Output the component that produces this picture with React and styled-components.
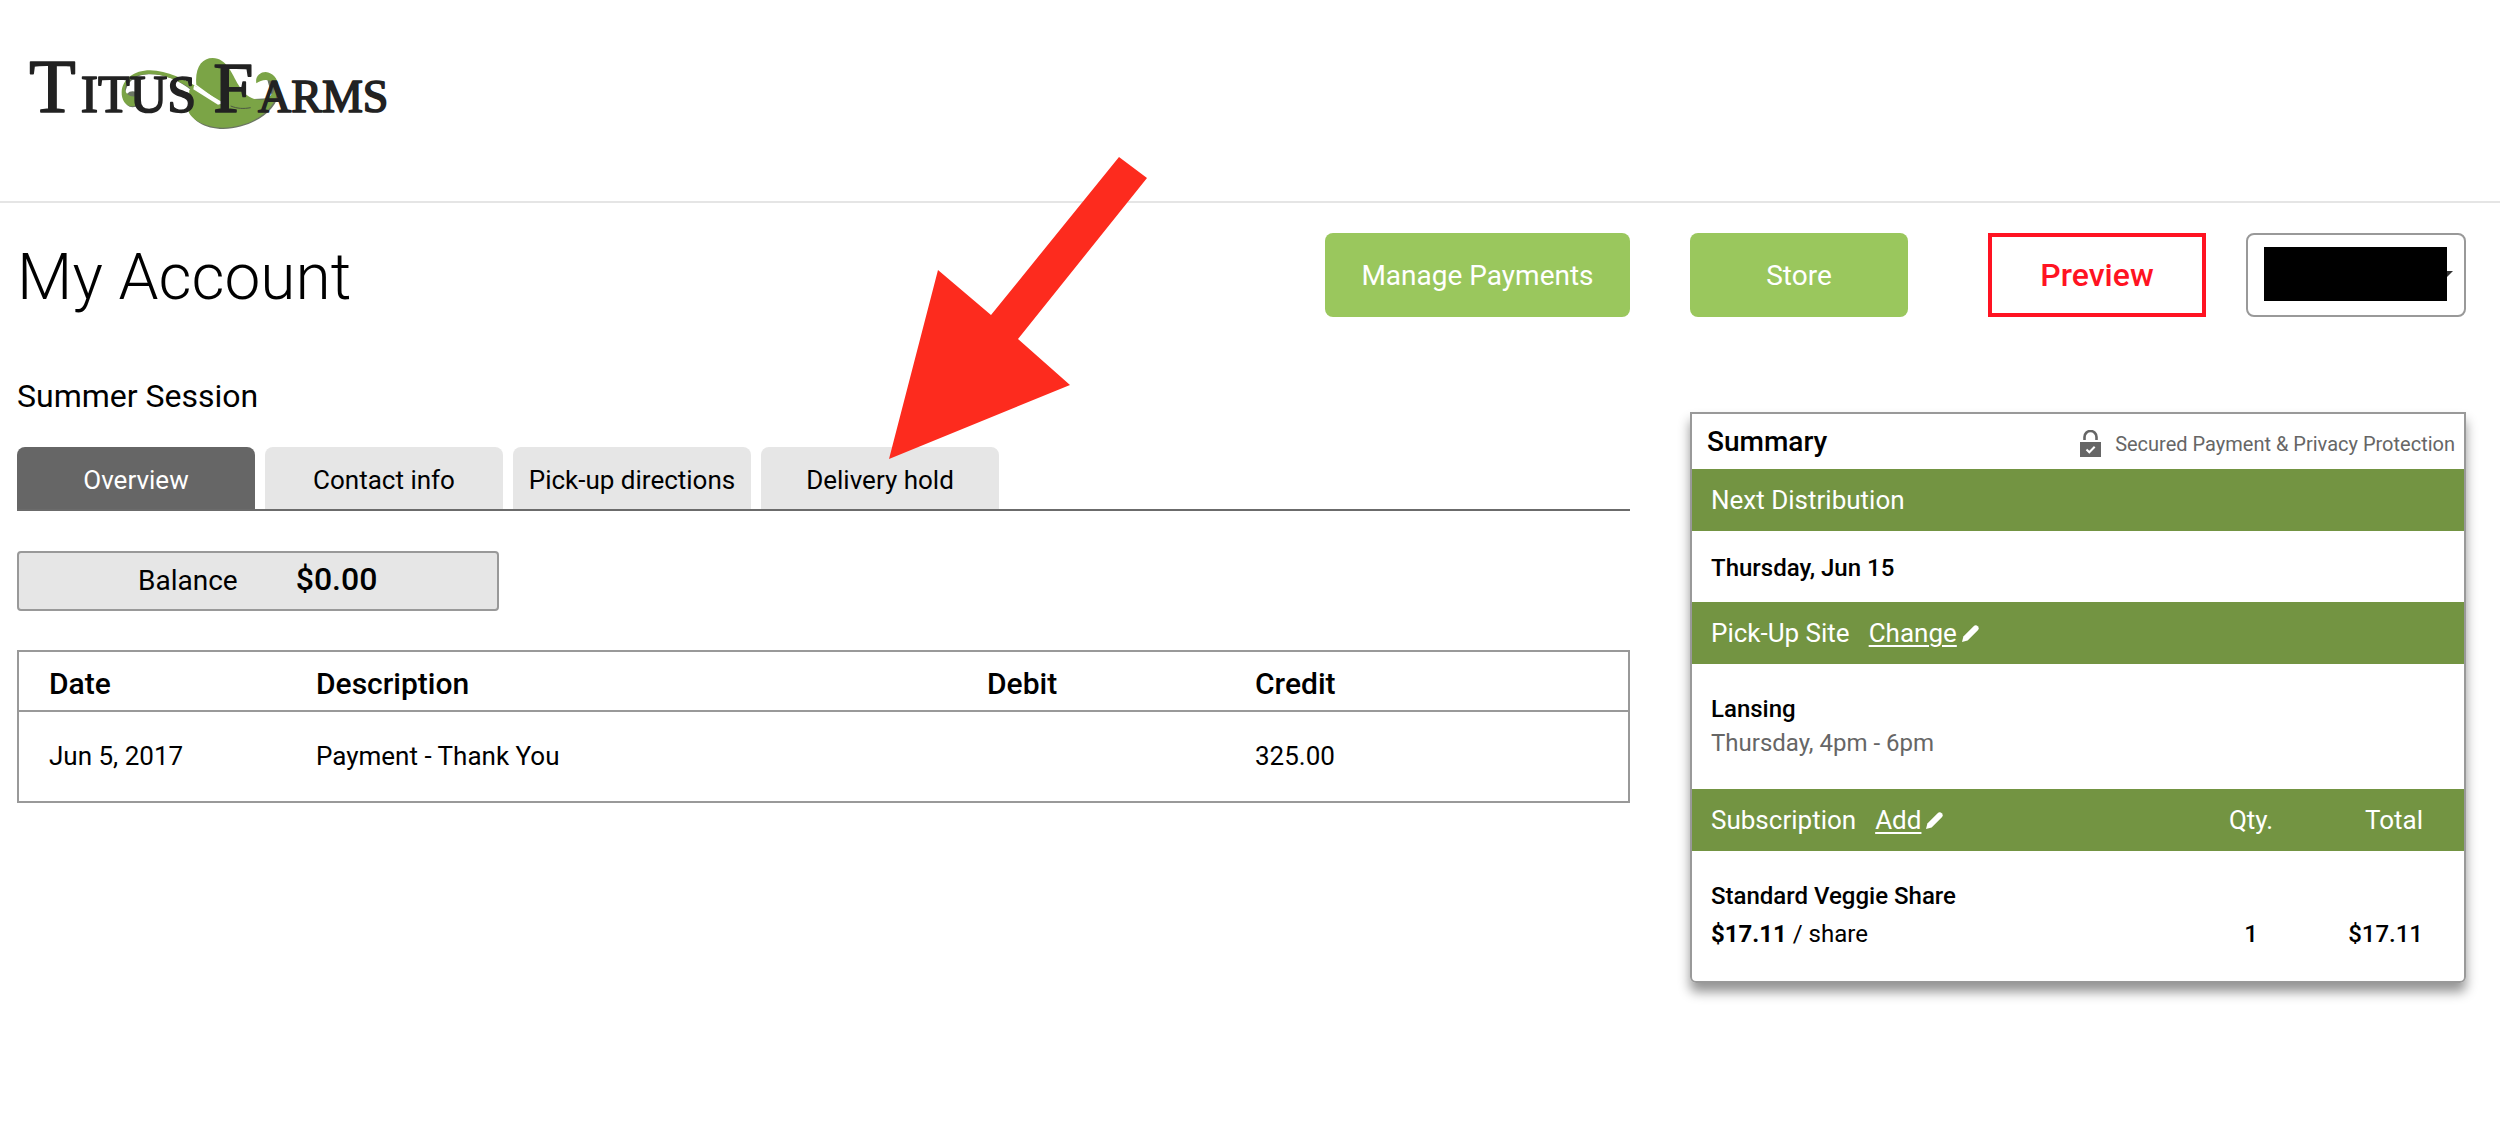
import { useState } from "react";
import styled, { createGlobalStyle } from "styled-components";

const GlobalStyle = createGlobalStyle`
    * {
        box-sizing: border-box;
    }
    body {
        margin: 0;
        min-height: 100vh;
        background-color: #fff;
        color: #000;
        font-family: Roboto, "Liberation Sans", sans-serif;
        font-size: 26px;
    }
    button, select {
        font-family: inherit;
    }
`;

const Header = styled.header`
    padding: 40px 25px 66px;
    border-bottom: 2px solid #e5e5e5;
`;
const LogoLink = styled.a`
    display: block;
    width: 370px;
    svg {
        display: block;
        width: 100%;
    }
`;
const Columns = styled.div`
    display: grid;
    grid-template-columns: minmax(0, 1613fr) minmax(0, 776fr);
    column-gap: 60px;
    padding: 0 34px 60px 17px;
`;
const TitleBar = styled.div`
    display: flex;
    align-items: center;
    justify-content: space-between;
    height: 84px;
    margin-top: 30px;
`;
const Title = styled.h1`
    margin: 0;
    padding-top: 6px;
    font-size: 64px;
    line-height: 84px;
    font-weight: 300;
`;
const ActionButton = styled.button`
    width: ${(props) => (props.$wide ? "305px" : "218px")};
    height: 84px;
    border: none;
    border-radius: 8px;
    background-color: #9ac75d;
    color: white;
    font-size: 28px;
    cursor: pointer;
`;
const PreviewButton = styled(ActionButton)`
    margin-left: 40px;
    border: 4px solid #ff1322;
    border-radius: 0;
    background-color: white;
    color: #ff1322;
    font-size: 32px;
    font-weight: 500;
`;
const AccountPicker = styled.label`
    position: relative;
    width: 220px;
    height: 84px;
    svg {
        position: absolute;
        top: 38px;
        right: 13px;
        width: 14px;
    }
`;
const AccountSelect = styled.select`
    width: 100%;
    height: 100%;
    border: 2px solid #999;
    border-radius: 8px;
    background-color: white;
    appearance: none;
`;
const AccountMask = styled.span`
    position: absolute;
    top: 14px;
    left: 18px;
    width: 183px;
    height: 54px;
    background-color: black;
    pointer-events: none;
`;

const Session = styled.h2`
    margin: 58px 0 30px;
    font-size: 32px;
    line-height: 42px;
    font-weight: 400;
`;
const TabBar = styled.nav`
    display: flex;
    gap: 10px;
    border-bottom: 2px solid #6b6b6b;
`;
const Tab = styled.button`
    position: relative;
    width: 238px;
    height: 62px;
    padding: 3px 0 0;
    border: none;
    border-radius: 8px 8px 0 0;
    background-color: ${(props) => (props.$active ? "#666" : "#e6e6e6")};
    color: ${(props) => (props.$active ? "white" : "black")};
    font-size: 26px;
    cursor: pointer;
`;
const Pointer = styled.svg`
    position: absolute;
    left: 128px;
    bottom: 50px;
    width: 258px;
    height: 302px;
    pointer-events: none;
`;
const Balance = styled.div`
    display: flex;
    align-items: baseline;
    gap: 58px;
    width: 482px;
    height: 60px;
    margin: 40px 0 39px;
    padding-left: 119px;
    border: 2px solid #999;
    border-radius: 4px;
    background-color: #e6e6e6;
    font-size: 28px;
    line-height: 52px;
    strong {
        font-size: 32px;
        font-weight: 500;
    }
`;
const Ledger = styled.table`
    width: 100%;
    border: 2px solid #999;
    border-collapse: collapse;
    table-layout: fixed;
    text-align: left;
    th {
        height: 60px;
        padding: 4px 0 0 30px;
        border-bottom: 2px solid #999;
        font-size: 30px;
        font-weight: 500;
    }
    td {
        height: 91px;
        padding: 0 0 1px 30px;
    }
`;
const Col = styled.col`
    width: ${(props) => props.$width};
`;

const Summary = styled.aside`
    align-self: start;
    margin-top: 95px;
    border: 2px solid #999;
    border-radius: 0 0 6px 6px;
    box-shadow: 0 9px 12px rgba(0, 0, 0, 0.42);
    font-size: 24px;
`;
const SummaryHead = styled.div`
    display: flex;
    align-items: center;
    justify-content: space-between;
    height: 55px;
    padding: 0 9px 0 15px;
    h2 {
        margin: 0;
        font-size: 28px;
        font-weight: 500;
    }
`;
const Secured = styled.span`
    display: flex;
    align-items: center;
    gap: 14px;
    color: #666;
    font-size: 20px;
    line-height: 28px;
    padding-top: 4px;
    svg {
        width: 21px;
        height: 27px;
    }
`;
const Band = styled.h3`
    display: flex;
    align-items: center;
    height: 62px;
    margin: 0;
    padding: 0 19px;
    background-color: #739442;
    color: white;
    font-size: 26px;
    font-weight: 400;
`;
const EditLink = styled.a`
    display: inline-flex;
    align-items: center;
    gap: 5px;
    margin-left: 19px;
    color: white;
    text-decoration: none;
    span {
        text-decoration: underline;
        text-decoration-thickness: 2px;
        text-underline-offset: 3px;
    }
    svg {
        width: 17px;
        height: 17px;
    }
`;
const BandBody = styled.div`
    height: 71px;
    padding: 20px 19px 0;
    line-height: 34px;
    strong {
        font-weight: 500;
    }
    p {
        margin: 0;
        color: #666;
    }
`;
const PickupBody = styled(BandBody)`
    height: 125px;
    padding-top: 28px;
`;
const Shares = styled.table`
    width: 100%;
    border-collapse: collapse;
    thead {
        background-color: #739442;
        color: white;
        font-size: 26px;
    }
    th {
        height: 62px;
        padding: 0 19px;
        font-weight: 400;
        text-align: left;
    }
    td {
        height: 130px;
        padding: 0 19px 2px;
        line-height: 38px;
        vertical-align: middle;
    }
    td + td {
        font-weight: 500;
    }
    th:nth-child(2), td:nth-child(2) {
        width: 90px;
        padding: 0;
        text-align: center;
    }
    th:nth-child(3), td:nth-child(3) {
        width: 168px;
        padding: 0 41px 0 0;
        text-align: right;
    }
    td:nth-child(2), td:nth-child(3) {
        padding-top: 36px;
    }
`;
const ShareName = styled.div`
    font-weight: 500;
`;
const Price = styled.strong`
    font-weight: 700;
`;

const Logo = () => (
    <svg viewBox="75 30 1110 285" role="img" aria-label="Titus Farms">
        <g fill="#6b7563" transform="translate(2 4)">
            <path d="M565 215C560 265 610 293 668 293C755 291 840 235 834 170C830 140 812 127 795 127L815 200Z" />
            <path d="M365 190C365 150 400 121 450 122C500 124 545 140 580 166L575 180C535 146 490 128 445 129C400 130 374 158 374 192Z" />
            <circle cx="396" cy="204" r="24" />
        </g>
        <g fill="#7ba446">
            <path d="M420 190C424 214 412 229 396 229C376 229 364 208 365 186C367 148 402 121 450 121C502 123 556 148 592 172L586 187C547 154 494 132 446 132C402 133 377 153 375 177C376 198 405 208 420 190Z" />
            <path d="M589 164C584 112 606 84 638 84C680 85 694 128 716 166C736 202 762 211 790 209C822 200 832 172 818 157C804 145 783 149 769 160C765 139 780 126 797 126C820 128 837 148 834 176C830 240 753 293 668 293C615 292 567 266 565 240L568 180L584 170L668 222Z" />
        </g>
        <path d="M582 166L671 219L654 224L580 178Z" fill="#fff" />
        <path d="M692 228C712 236 730 237 752 233" fill="none" stroke="#4c5744" strokeWidth="3" />
        <g fill="#222" stroke="#222" strokeWidth="5" strokeLinejoin="round" fontFamily='"Liberation Serif", serif'>
            <text x="88" y="246" fontSize="228">T</text>
            <text x="242" y="246" fontSize="156">ITUS</text>
            <text x="640" y="246" fontSize="216">F</text>
            <text x="774" y="246" fontSize="138">ARMS</text>
        </g>
    </svg>
);

const LockIcon = () => (
    <svg viewBox="0 0 21 27" aria-hidden="true">
        <path d="M4.5 10V7a6 6 0 0 1 12 0v3" fill="none" stroke="#666" strokeWidth="2.6" />
        <path d="M0 12h21v15H0z" fill="#666" />
        <path d="M6.5 19.5l2.8 2.8 5.4-5.6" fill="none" stroke="#fff" strokeWidth="2" />
    </svg>
);

const PencilIcon = () => (
    <svg viewBox="0 0 17 17" aria-hidden="true">
        <path d="M0 17L1.4 11.4L11.4 1.4C13 -0.2 14.6 0 15.8 1.2C17 2.4 17 4 15.6 5.6L5.6 15.4Z" fill="#fff" />
    </svg>
);

const tabs = ["Overview", "Contact info", "Pick-up directions", "Delivery hold"];

const entries = [
    { date: "Jun 5, 2017", description: "Payment - Thank You", debit: "", credit: "325.00" },
];

const App = () => {
    const [activeTab, setActiveTab] = useState("Overview");

    return (
        <>
            <GlobalStyle />
            <Header>
                <LogoLink href="#home"><Logo /></LogoLink>
            </Header>
            <Columns>
                <main>
                    <TitleBar>
                        <Title>My Account</Title>
                        <ActionButton $wide>Manage Payments</ActionButton>
                    </TitleBar>
                    <Session>Summer Session</Session>
                    <TabBar>
                        {tabs.map((tab) => (
                            <Tab key={tab} $active={tab === activeTab} onClick={() => setActiveTab(tab)}>
                                {tab}
                                {tab === "Delivery hold" && (
                                    <Pointer viewBox="0 0 258 302" aria-hidden="true">
                                        <path d="M0 302L49 113L102 158L230 0L258 21L129 182L181 228Z" fill="#fd2b1e" />
                                    </Pointer>
                                )}
                            </Tab>
                        ))}
                    </TabBar>
                    <Balance>
                        <span>Balance</span>
                        <strong>$0.00</strong>
                    </Balance>
                    <Ledger>
                        <colgroup>
                            <Col $width="268px" />
                            <Col $width="auto" />
                            <Col $width="268px" />
                            <Col $width="404px" />
                        </colgroup>
                        <thead>
                            <tr>
                                <th>Date</th>
                                <th>Description</th>
                                <th>Debit</th>
                                <th>Credit</th>
                            </tr>
                        </thead>
                        <tbody>
                            {entries.map((entry) => (
                                <tr key={entry.date}>
                                    <td>{entry.date}</td>
                                    <td>{entry.description}</td>
                                    <td>{entry.debit}</td>
                                    <td>{entry.credit}</td>
                                </tr>
                            ))}
                        </tbody>
                    </Ledger>
                </main>
                <div>
                    <TitleBar>
                        <ActionButton>Store</ActionButton>
                        <PreviewButton>Preview</PreviewButton>
                        <AccountPicker>
                            <AccountSelect aria-label="Account">
                                <option></option>
                            </AccountSelect>
                            <svg viewBox="0 0 14 7" aria-hidden="true">
                                <path d="M0 0h14l-7 7z" fill="#333" />
                            </svg>
                            <AccountMask />
                        </AccountPicker>
                    </TitleBar>
                    <Summary>
                        <SummaryHead>
                            <h2>Summary</h2>
                            <Secured><LockIcon />Secured Payment &amp; Privacy Protection</Secured>
                        </SummaryHead>
                        <Band>Next Distribution</Band>
                        <BandBody><strong>Thursday, Jun 15</strong></BandBody>
                        <Band>
                            Pick-Up Site
                            <EditLink href="#change"><span>Change</span><PencilIcon /></EditLink>
                        </Band>
                        <PickupBody>
                            <strong>Lansing</strong>
                            <p>Thursday, 4pm - 6pm</p>
                        </PickupBody>
                        <Shares>
                            <thead>
                                <tr>
                                    <th>
                                        Subscription
                                        <EditLink href="#add"><span>Add</span><PencilIcon /></EditLink>
                                    </th>
                                    <th>Qty.</th>
                                    <th>Total</th>
                                </tr>
                            </thead>
                            <tbody>
                                <tr>
                                    <td>
                                        <ShareName>Standard Veggie Share</ShareName>
                                        <Price>$17.11</Price> / share
                                    </td>
                                    <td>1</td>
                                    <td>$17.11</td>
                                </tr>
                            </tbody>
                        </Shares>
                    </Summary>
                </div>
            </Columns>
        </>
    );
};

export default App;
